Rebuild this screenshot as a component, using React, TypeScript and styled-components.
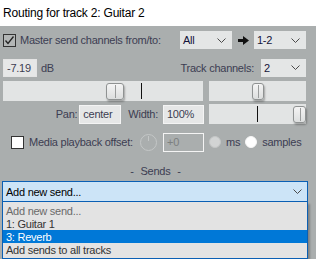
import styled, { createGlobalStyle } from 'styled-components'

const GlobalStyle = createGlobalStyle`
  html, body {
    margin: 0;
    padding: 0;
    background: #aaaeae;
  }
  body {
    font-family: "Liberation Sans", Arial, sans-serif;
    font-size: 11px;
    letter-spacing: -0.25px;
    color: #3c3d52;
  }
`

const Window = styled.div`
  width: 316px;
  height: 259px;
  overflow: hidden;
  background: #aaaeae;
  display: flex;
  flex-direction: column;
`

const TitleBar = styled.div`
  height: 26px;
  flex: none;
  background: #ffffff;
  color: #000;
  font-size: 12px;
  letter-spacing: -0.2px;
  display: flex;
  align-items: center;
  padding-left: 3px;
`

const Body = styled.div`
  padding: 0 10px 0 3px;
  display: flex;
  flex-direction: column;
`

const Row = styled.div<{ $top: number; $h: number }>`
  display: flex;
  align-items: center;
  margin-top: ${(p) => p.$top}px;
  height: ${(p) => p.$h}px;
`

const Group = styled.div<{ $w: number; $end?: boolean }>`
  width: ${(p) => p.$w}px;
  flex: none;
  display: flex;
  align-items: center;
  justify-content: ${(p) => (p.$end ? 'flex-end' : 'flex-start')};
`

const CheckBox = styled.div<{ $checked?: boolean; $indent?: number }>`
  width: 13px;
  height: 13px;
  box-sizing: border-box;
  border: 1px solid #333;
  background: ${(p) => (p.$checked ? '#b3b6b6' : '#ffffff')};
  margin-left: ${(p) => p.$indent ?? 0}px;
  margin-right: ${(p) => (p.$checked ? 4 : 5)}px;
  display: flex;
  align-items: center;
  justify-content: center;
  flex: none;
`

const Label = styled.span<{ $gap?: number }>`
  white-space: nowrap;
  margin-right: ${(p) => p.$gap ?? 0}px;
`

const Select = styled.div<{ $w: number }>`
  width: ${(p) => p.$w}px;
  height: 18px;
  box-sizing: border-box;
  background: #e4e6e6;
  color: #14143a;
  display: flex;
  align-items: center;
  justify-content: space-between;
  padding: 0 6px 0 3px;
  flex: none;
`

const ArrowBox = styled.div`
  width: 22px;
  display: flex;
  align-items: center;
  justify-content: center;
  flex: none;
`

const Input = styled.div<{ $w: number; $disabled?: boolean; $framed?: boolean }>`
  width: ${(p) => p.$w}px;
  height: ${(p) => (p.$framed ? 19 : 18)}px;
  box-sizing: border-box;
  border: 1px solid ${(p) => (p.$framed ? '#f4f4f4' : '#e4e4e4')};
  background: ${(p) => (p.$disabled ? '#aaaeae' : '#e6e7e7')};
  color: ${(p) => (p.$disabled ? '#7d8080' : '#3c3d52')};
  display: flex;
  align-items: center;
  padding-left: 3px;
  flex: none;
`

const Spacer = styled.div`
  flex: 1;
`

const Track = styled.div<{ $w: number }>`
  position: relative;
  width: ${(p) => p.$w}px;
  height: 20px;
  background: #e2e4e4;
  flex: none;
`

const Tick = styled.div`
  position: absolute;
  top: 2px;
  bottom: 2px;
  width: 1px;
  background: #111;
`

const Thumb = styled.div<{ $w: number }>`
  position: absolute;
  top: 2px;
  width: ${(p) => p.$w}px;
  height: 17px;
  box-sizing: border-box;
  border: 1px solid #8f9292;
  border-radius: 3px;
  background: linear-gradient(#f4f4f4, #dcdede);
  box-shadow: 1px 2px 2px rgba(0, 0, 0, 0.28);
  &::after {
    content: '';
    position: absolute;
    left: 50%;
    top: 1px;
    bottom: 1px;
    width: 1px;
    background: #9a9c9c;
  }
`

const Knob = styled.div`
  position: relative;
  width: 17px;
  height: 17px;
  box-sizing: border-box;
  border: 1px solid #c4c7c7;
  border-radius: 50%;
  margin-right: 6px;
  flex: none;
  &::after {
    content: '';
    position: absolute;
    left: 7px;
    top: 1px;
    width: 1px;
    height: 5px;
    background: #c4c7c7;
  }
`

const Radio = styled.div<{ $selected?: boolean; $left: number }>`
  width: 12px;
  height: 12px;
  box-sizing: border-box;
  border-radius: 50%;
  border: 1px solid ${(p) => (p.$selected ? '#c4c6c6' : '#f6f6f6')};
  background: ${(p) => (p.$selected ? '#d2d4d4' : '#ffffff')};
  margin-left: ${(p) => p.$left}px;
  margin-right: 5px;
  flex: none;
`

const SendsTitle = styled.div`
  margin-top: 13px;
  height: 14px;
  display: flex;
  justify-content: center;
  align-items: center;
  word-spacing: 4px;
  padding-left: 2px;
`

const Combo = styled.div`
  position: relative;
  margin: 3px -2px 0 -1px;
`

const ComboBox = styled.div`
  height: 21px;
  box-sizing: border-box;
  border: 1px solid #0a5fb4;
  background: #cce4f7;
  color: #000;
  display: flex;
  align-items: center;
  justify-content: space-between;
  padding: 0 5px 0 3px;
`

const Menu = styled.div`
  position: absolute;
  left: 0;
  right: 0;
  top: 21px;
  height: 57px;
  box-sizing: border-box;
  border: 1px solid #0a5fb4;
  border-top: none;
  background: #e3e3e3;
  box-shadow: 2px 2px 2px rgba(0, 0, 0, 0.25);
  padding-top: 2px;
`

const MenuItem = styled.div<{ $active?: boolean; $muted?: boolean }>`
  height: 13px;
  display: flex;
  align-items: center;
  padding-left: 3px;
  background: ${(p) => (p.$active ? '#0078d7' : 'transparent')};
  color: ${(p) => (p.$active ? '#fff' : p.$muted ? '#6a6a6a' : '#333')};
`

const Chevron = () => (
  <svg width="9" height="5" viewBox="0 0 9 5">
    <polyline points="0.5,0.5 4.5,4.5 8.5,0.5" fill="none" stroke="#4a4a4a" strokeWidth="1" />
  </svg>
)

const RightArrow = () => (
  <svg width="11" height="9" viewBox="0 0 11 9">
    <rect x="0" y="3" width="6" height="3" fill="#111" />
    <polygon points="5,0 11,4.5 5,9" fill="#111" />
  </svg>
)

const Check = () => (
  <svg width="11" height="11" viewBox="0 0 11 11">
    <polyline points="1.5,5.5 4,8.5 9.5,1.5" fill="none" stroke="#222" strokeWidth="1.3" />
  </svg>
)

const App = () => {
  return (
    <>
      <GlobalStyle />
      <Window>
        <TitleBar>Routing for track 2: Guitar 2</TitleBar>
        <Body>
          <Row $top={5} $h={18}>
            <CheckBox $checked>
              <Check />
            </CheckBox>
            <Label>Master send channels from/to:</Label>
            <Spacer />
            <Select $w={52}>
              <span>All</span>
              <Chevron />
            </Select>
            <ArrowBox>
              <RightArrow />
            </ArrowBox>
            <Select $w={52}>
              <span>1-2</span>
              <Chevron />
            </Select>
          </Row>

          <Row $top={9} $h={19}>
            <Input $w={34}>-7.19</Input>
            <Label style={{ marginLeft: 4 }}>dB</Label>
            <Spacer />
            <Label $gap={7}>Track channels:</Label>
            <Select $w={45}>
              <span>2</span>
              <Chevron />
            </Select>
          </Row>

          <Row $top={4} $h={20}>
            <Track $w={200}>
              <Tick style={{ left: 138 }} />
              <Thumb $w={18} style={{ left: 103 }} />
            </Track>
            <Spacer />
            <Track $w={97}>
              <Tick style={{ left: 48 }} />
              <Thumb $w={12} style={{ left: 43 }} />
            </Track>
          </Row>

          <Row $top={3} $h={20}>
            <Group $w={201} $end>
              <Label $gap={2}>Pan:</Label>
              <Input $w={42} $framed>
                center
              </Input>
              <Label style={{ marginLeft: 7 }} $gap={5}>
                Width:
              </Label>
              <Input $w={41} $framed>
                100%
              </Input>
            </Group>
            <Spacer />
            <Track $w={97}>
              <Tick style={{ left: 48 }} />
              <Thumb $w={13} style={{ left: 84 }} />
            </Track>
          </Row>

          <Row $top={9} $h={18}>
            <Group $w={201}>
              <CheckBox $indent={8} />
              <Label>Media playback offset:</Label>
              <Spacer />
              <Knob />
              <Input $w={41} $framed $disabled>
                +0
              </Input>
            </Group>
            <Radio $selected $left={5} />
            <Label>ms</Label>
            <Radio $left={5} />
            <Label>samples</Label>
          </Row>

          <SendsTitle>- Sends -</SendsTitle>

          <Combo>
            <ComboBox>
              <span>Add new send...</span>
              <Chevron />
            </ComboBox>
            <Menu>
              <MenuItem $muted>Add new send...</MenuItem>
              <MenuItem>1: Guitar 1</MenuItem>
              <MenuItem $active>3: Reverb</MenuItem>
              <MenuItem>Add sends to all tracks</MenuItem>
            </Menu>
          </Combo>
        </Body>
      </Window>
    </>
  )
}

export default App
